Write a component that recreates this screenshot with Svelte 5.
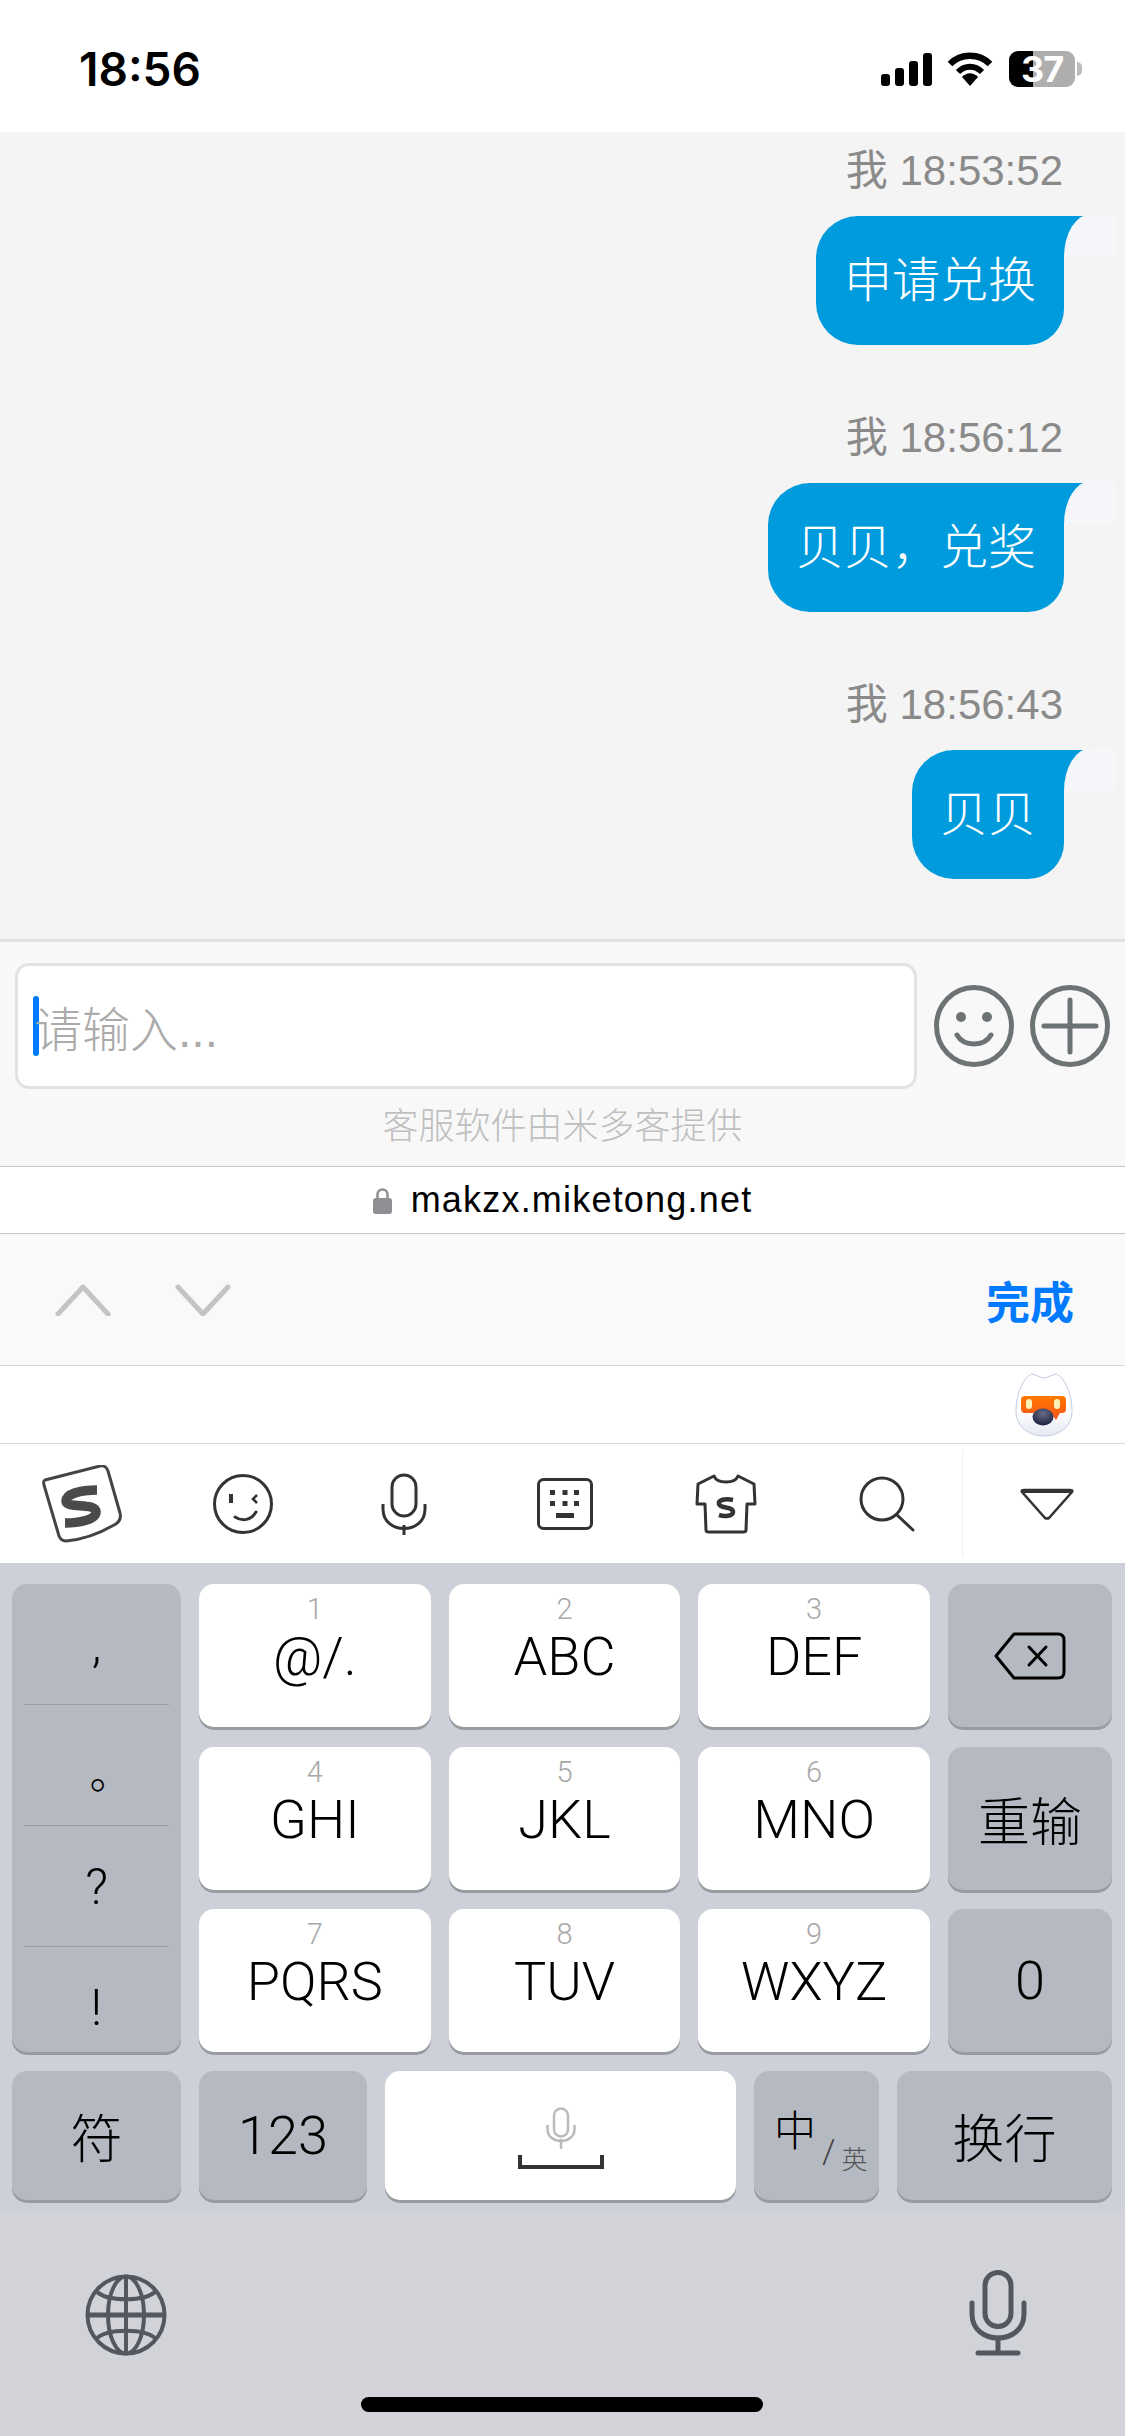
<script>
	const messages = [
		{ time: '我 18:53:52', text: '申请兑换' },
		{ time: '我 18:56:12', text: '贝贝，兑奖' },
		{ time: '我 18:56:43', text: '贝贝' }
	];
	const numKeys = [
		{ n: '1', l: '@/.' },
		{ n: '2', l: 'ABC' },
		{ n: '3', l: 'DEF' },
		{ n: '4', l: 'GHI' },
		{ n: '5', l: 'JKL' },
		{ n: '6', l: 'MNO' },
		{ n: '7', l: 'PQRS' },
		{ n: '8', l: 'TUV' },
		{ n: '9', l: 'WXYZ' }
	];
	const symbols = [',', '。', '?', '!'];
</script>

<div class="phone">
	<header class="status">
		<span class="clock">18:56</span>
		<div class="status-icons">
			<svg width="51" height="33" viewBox="0 0 51 33" fill="#000">
				<rect x="0" y="21" width="9" height="12" rx="3" />
				<rect x="14" y="15" width="9" height="18" rx="3" />
				<rect x="28" y="8" width="9" height="25" rx="3" />
				<rect x="42" y="0" width="9" height="33" rx="3" />
			</svg>
			<svg width="46" height="34" viewBox="0 0 46 34">
				<path d="M3 12 C14 1 32 1 43 12" fill="none" stroke="#000" stroke-width="6.5" />
				<path d="M11 20 C18 13 28 13 35 20" fill="none" stroke="#000" stroke-width="6" />
				<path d="M15 25 C20 20 26 20 31 25 L23 34 Z" fill="#000" />
			</svg>
			<div class="battery">
				<div class="battery-body"><span>37</span></div>
				<div class="battery-nub"></div>
			</div>
		</div>
	</header>

	<section class="chat">
		{#each messages as m}
			<div class="stamp">{m.time}</div>
			<div class="bubble">{m.text}</div>
		{/each}
	</section>

	<section class="composer">
		<div class="composer-row">
			<div class="input">
				<i class="caret"></i><span>请输入...</span>
			</div>
			<svg class="round smile" width="80" height="82" viewBox="0 0 80 82" fill="none" stroke="#6d7275" stroke-width="5">
				<ellipse cx="40" cy="41" rx="37.5" ry="38.5" />
				<circle cx="27" cy="32" r="5" fill="#6d7275" stroke="none" />
				<circle cx="53" cy="32" r="5" fill="#6d7275" stroke="none" />
				<path d="M23 50 C30 62 50 62 57 50" stroke-linecap="round" />
			</svg>
			<svg class="round" width="80" height="82" viewBox="0 0 80 82" fill="none" stroke="#6d7275" stroke-width="5">
				<ellipse cx="40" cy="41" rx="37.5" ry="38.5" />
				<path d="M14 41 H66 M40 15 V67" stroke-linecap="round" />
			</svg>
		</div>
		<p class="vendor">客服软件由米多客提供</p>
	</section>

	<div class="urlbar">
		<svg width="19" height="27" viewBox="0 0 19 27">
			<path d="M4.5 12 V7.5 a5 5 0 0 1 10 0 V12" fill="none" stroke="#8e8e93" stroke-width="2.5" />
			<rect x="0" y="11" width="19" height="16" rx="3" fill="#8e8e93" />
		</svg>
		<span>makzx.miketong.net</span>
	</div>

	<div class="accessory">
		<svg width="56" height="32" viewBox="0 0 56 32" fill="none" stroke="#c4c4c4" stroke-width="5" stroke-linecap="round" stroke-linejoin="round">
			<path d="M3 30 L28 3 L53 30" />
		</svg>
		<svg class="down" width="56" height="32" viewBox="0 0 56 32" fill="none" stroke="#c4c4c4" stroke-width="5" stroke-linecap="round" stroke-linejoin="round">
			<path d="M3 3 L28 30 L53 3" />
		</svg>
		<span class="done">完成</span>
	</div>

	<div class="candidates">
		<svg width="58" height="64" viewBox="0 0 58 64">
			<defs>
				<linearGradient id="egg" x1="0" y1="0" x2="0" y2="1">
					<stop offset="0.6" stop-color="#ffffff" />
					<stop offset="1" stop-color="#e6e8f2" />
				</linearGradient>
				<linearGradient id="band" x1="0" y1="0" x2="0" y2="1">
					<stop offset="0" stop-color="#ff7a00" />
					<stop offset="1" stop-color="#f9541c" />
				</linearGradient>
				<radialGradient id="nose" cx="0.5" cy="0.3" r="0.7">
					<stop offset="0" stop-color="#6a6d88" />
					<stop offset="1" stop-color="#1d2040" />
				</radialGradient>
			</defs>
			<path d="M17 1 C22 2 25 5 29 5 C33 5 36 2 41 1 C50 4 57 22 57 38 C57 54 44 63 29 63 C14 63 1 54 1 38 C1 22 8 4 17 1 Z" fill="url(#egg)" stroke="#c5cae4" stroke-width="1" />
			<path d="M10 23 H47 Q51 23 51 27 V36 Q51 40 47 40 H45 L41 47 L36 40 H10 Q6 40 6 36 V27 Q6 23 10 23 Z" fill="url(#band)" />
			<rect x="11" y="26" width="6" height="10" rx="3" fill="#fff2b8" />
			<rect x="39" y="26" width="6" height="10" rx="3" fill="#fff2b8" />
			<ellipse cx="28" cy="44" rx="10.5" ry="8.5" fill="url(#nose)" />
		</svg>
	</div>

	<nav class="ime-bar">
		<div class="ime-cell">
			<svg width="80" height="78" viewBox="0 0 80 78">
				<path d="M3 15 L58 1 Q64 0 66 6 L78 48 Q80 56 72 60 Q48 74 24 76 Q19 76 17 71 L2 20 Q1 16 3 15 Z" fill="none" stroke="#444" stroke-width="3" />
				<path d="M55 25 C38 25 24 29 24 36 C24 44 54 37 54 47 C54 55 36 58 23 58" fill="none" stroke="#4a4a4a" stroke-width="9.5" />
			</svg>
		</div>
		<div class="ime-cell">
			<svg width="60" height="60" viewBox="0 0 60 60" fill="none" stroke="#333" stroke-width="3">
				<circle cx="30" cy="30" r="28.5" />
				<rect x="16" y="20" width="4" height="9" fill="#333" stroke="none" />
				<path d="M44 21 L40 25 L44 29" stroke-width="2.6" />
				<path d="M22 43 C30 48 38 46 43 38" stroke-linecap="round" />
			</svg>
		</div>
		<div class="ime-cell">
			<svg width="46" height="62" viewBox="0 0 46 62" fill="none" stroke="#333" stroke-width="3">
				<rect x="11" y="2" width="24" height="41" rx="12" />
				<path d="M2 31 V36 C2 62 44 62 44 36 V31" />
				<path d="M23 52 V62" />
			</svg>
		</div>
		<div class="ime-cell">
			<svg width="56" height="52" viewBox="0 0 56 52">
				<rect x="1.5" y="1.5" width="53" height="49" rx="5" fill="none" stroke="#333" stroke-width="3" />
				<g fill="#333">
					<rect x="13" y="12" width="5" height="5" /><rect x="25.5" y="12" width="5" height="5" /><rect x="37" y="12" width="5" height="5" />
					<rect x="13" y="23" width="5" height="5" /><rect x="25.5" y="23" width="5" height="5" /><rect x="37" y="23" width="5" height="5" />
					<rect x="19" y="35" width="18" height="5" />
				</g>
			</svg>
		</div>
		<div class="ime-cell">
			<svg width="62" height="60" viewBox="0 0 62 60" fill="none" stroke="#333" stroke-width="3" stroke-linejoin="round">
				<path d="M19 2 C22 10 40 10 43 2 L59 10 L60 30 L52 30 L51 56 Q51 58 48 58 H14 Q11 58 11 56 L10 30 L2 30 L3 10 Z" />
				<path d="M38 26 C30 24 23 26 24 30 C25 35 38 32 38 38 C38 42 30 43 24 41" stroke-width="4.5" />
			</svg>
		</div>
		<div class="ime-cell">
			<svg width="56" height="56" viewBox="0 0 56 56" fill="none" stroke="#333" stroke-width="3">
				<circle cx="23" cy="23" r="21" />
				<path d="M38 39 L54 54" stroke-linecap="round" />
			</svg>
		</div>
		<div class="ime-cell ime-last">
			<svg width="54" height="32" viewBox="0 0 54 32" fill="none" stroke="#333" stroke-width="2.6" stroke-linejoin="round">
				<path d="M2 4 Q1 2 4 2 H50 Q53 2 52 4 L29 30 Q27 31 25 30 Z" />
				<path d="M2 3 H52" stroke-width="4" />
			</svg>
		</div>
	</nav>

	<section class="keyboard">
		<div class="grid">
			<div class="key dark symbols">
				{#each symbols as s}
					<div class="symbol"><span>{s}</span></div>
				{/each}
			</div>
			{#each numKeys as k, i}
				<div class="key num" style="grid-row: {Math.floor(i / 3) + 1}">
					<span class="digit">{k.n}</span>
					<span class="letters">{k.l}</span>
				</div>
			{/each}
			<button class="key dark side backspace" aria-label="delete">
				<svg width="72" height="48" viewBox="0 0 72 48" fill="none" stroke="#000" stroke-width="3" stroke-linejoin="round">
					<path d="M20 2 H64 Q70 2 70 8 V40 Q70 46 64 46 H20 L2 24 Z" />
					<path d="M35 15 L52 33 M52 15 L35 33" stroke-linecap="round" />
				</svg>
			</button>
			<div class="key dark side cjk retype">重输</div>
			<div class="key dark side zero">0</div>
		</div>

		<div class="bottom-row">
			<div class="key dark cjk fn w169">符</div>
			<div class="key dark fn w168 digits">123</div>
			<div class="key space">
				<svg width="30" height="42" viewBox="0 0 30 42" fill="none" stroke="#bbb" stroke-width="2.5">
					<rect x="8" y="1.5" width="14" height="28" rx="7" />
					<path d="M1.5 18 V22 C1.5 38 28.5 38 28.5 22 V18" />
					<path d="M15 32 V42" />
				</svg>
				<svg width="86" height="14" viewBox="0 0 86 14" fill="none" stroke="#333" stroke-width="4">
					<path d="M2 0 V12 H84 V0" />
				</svg>
			</div>
			<div class="key dark fn w125 lang">
				<span class="zh">中</span><span class="slash">/</span><span class="en">英</span>
			</div>
			<div class="key dark cjk fn grow">换行</div>
		</div>

		<div class="sys-row">
			<svg width="82" height="82" viewBox="0 0 82 82" fill="none" stroke="#53575e" stroke-width="4">
				<circle cx="41" cy="41" r="38.5" />
				<ellipse cx="41" cy="41" rx="18" ry="38.5" />
				<path d="M41 2.5 V79.5" />
				<path d="M2.5 41 H79.5" stroke-width="5" />
				<path d="M11 17 C22 28 60 28 71 17" />
				<path d="M11 65 C22 54 60 54 71 65" />
			</svg>
			<svg width="58" height="86" viewBox="0 0 58 86" fill="none" stroke="#53575e" stroke-width="5" stroke-linecap="round">
				<rect x="16" y="2.5" width="26" height="54" rx="13" />
				<path d="M3 33 V44 C3 76 55 76 55 44 V33" />
				<path d="M29 68 V82" />
				<path d="M9 83 H49" stroke-width="5" />
			</svg>
		</div>

		<div class="home"></div>
	</section>
</div>

<style>
	:global(body) {
		margin: 0;
		background: #fff;
	}

	.phone {
		width: 1125px;
		height: 2436px;
		display: flex;
		flex-direction: column;
		overflow: hidden;
		font-family: "Liberation Sans", "Noto Sans CJK SC", sans-serif;
	}

	.status {
		height: 132px;
		box-sizing: border-box;
		flex: none;
		background: #fff;
		display: flex;
		justify-content: space-between;
		align-items: center;
		padding: 6px 43px 0 79px;
	}

	.clock {
		font-family: Inter, sans-serif;
		font-size: 46px;
		font-weight: 600;
		color: #000;
	}

	.status-icons {
		display: flex;
		align-items: center;
		gap: 15px;
	}

	.battery {
		display: flex;
		align-items: center;
		gap: 2px;
		margin-left: 1px;
	}

	.battery-body {
		width: 66px;
		height: 36px;
		border-radius: 9px;
		background: linear-gradient(90deg, #000 24px, #aeaeae 24px);
		color: #fff;
		font-size: 36px;
		font-weight: 700;
		display: flex;
		align-items: center;
		justify-content: center;
		font-family: Inter, sans-serif;
		letter-spacing: -1px;
	}

	.battery-nub {
		width: 5px;
		height: 14px;
		background: #bbb;
		border-radius: 0 5px 5px 0;
	}

	.chat {
		height: 810px;
		flex: none;
		box-sizing: border-box;
		background: #f4f4f4;
		display: flex;
		flex-direction: column;
		align-items: flex-end;
		padding: 14px 61px 0 0;
		border-bottom: 3px solid #e1e1e1;
	}

	.stamp {
		font-size: 42px;
		line-height: 50px;
		color: #8a8a8a;
		margin-right: 1px;
	}

	.bubble {
		position: relative;
		height: 129px;
		box-sizing: border-box;
		margin: 20px 0 68px;
		padding: 0 28px;
		background: #009bdc;
		color: #fff;
		font-size: 48px;
		font-weight: 300;
		line-height: 129px;
		border-radius: 42px 0 36px 42px;
	}

	.bubble::before {
		content: "";
		position: absolute;
		left: 100%;
		top: 0;
		width: 25px;
		height: 40px;
		background: #009bdc;
		border-bottom: 1px solid #b9dcf0;
	}

	.bubble::after {
		content: "";
		position: absolute;
		left: 100%;
		top: -2px;
		width: 52px;
		height: 43px;
		background: #f5f6f9;
		border-top-left-radius: 27px 43px;
	}

	.composer {
		height: 225px;
		flex: none;
		box-sizing: border-box;
		background: #f8f8f8;
		border-bottom: 1px solid #c4c4c4;
		padding: 21px 15px 0;
	}

	.composer-row {
		display: flex;
		align-items: center;
		gap: 16px;
	}

	.input {
		width: 902px;
		height: 126px;
		box-sizing: border-box;
		background: #fff;
		border: 3px solid #e2e2e2;
		border-radius: 14px;
		display: flex;
		align-items: center;
		padding-left: 15px;
		color: #ababab;
		font-size: 48px;
		font-weight: 300;
		flex: none;
	}

	.caret {
		width: 6px;
		height: 60px;
		background: #007aff;
		border-radius: 3px;
		margin-right: -5px;
		flex: none;
	}

	.round {
		flex: none;
	}

	.smile {
		margin-left: 1px;
	}

	.vendor {
		margin: 18px 0 0;
		text-align: center;
		font-size: 36px;
		line-height: 40px;
		font-weight: 300;
		color: #bfbfbf;
	}

	.urlbar {
		height: 67px;
		flex: none;
		box-sizing: border-box;
		background: #fff;
		border-bottom: 1px solid #c4c4c4;
		display: flex;
		align-items: center;
		justify-content: center;
		gap: 19px;
		font-size: 36px;
		letter-spacing: 1.2px;
		color: #000;
	}

	.accessory {
		height: 132px;
		flex: none;
		box-sizing: border-box;
		background: #f9f9f9;
		border-bottom: 1px solid #d8d8d8;
		display: flex;
		align-items: center;
		padding: 0 51px 0 55px;
	}

	.down {
		margin-left: 64px;
	}

	.done {
		margin-left: auto;
		font-size: 44px;
		font-weight: 700;
		color: #007aff;
	}

	.candidates {
		height: 78px;
		flex: none;
		box-sizing: border-box;
		background: #fff;
		border-bottom: 1px solid #d8d8d8;
		display: flex;
		justify-content: flex-end;
		align-items: center;
		padding-right: 52px;
	}

	.ime-bar {
		height: 119px;
		flex: none;
		background: #fff;
		display: grid;
		grid-template-columns: repeat(6, 161px) 1fr;
		padding-left: 1px;
	}

	.ime-cell {
		display: flex;
		align-items: center;
		justify-content: center;
	}

	.ime-last {
		margin: 6px 0 6px -5px;
		padding-left: 5px;
		border-left: 1px solid #f0f0f0;
	}

	.keyboard {
		flex: 1;
		background: linear-gradient(#cdd0d8 647px, #d1d3d9 647px);
		padding: 21px 13px 0 12px;
		display: flex;
		flex-direction: column;
	}

	.grid {
		display: grid;
		grid-template-columns: 169px 1fr 1fr 1fr 164px;
		grid-template-rows: repeat(3, 143px);
		column-gap: 18px;
		row-gap: 19.5px;
	}

	.key {
		border-radius: 15px;
		box-shadow: 0 3px 0 #989ba0;
		background: #fff;
		color: #000;
		box-sizing: border-box;
	}

	.dark {
		background: #b5b9c1;
	}

	button.key {
		border: 0;
		padding: 0;
	}

	.symbols {
		grid-row: 1 / 4;
		grid-column: 1;
		display: flex;
		flex-direction: column;
		padding: 0 12px;
	}

	.symbol {
		height: 121px;
		flex: none;
		border-top: 1px solid #9a9da4;
		box-sizing: border-box;
		display: flex;
		justify-content: center;
		font-family: Roboto, "Noto Sans CJK SC", sans-serif;
		font-weight: 300;
		font-size: 50px;
		line-height: 60px;
	}

	.symbol:first-child {
		border-top: 0;
		height: 120px;
		padding-top: 31px;
	}

	.symbol:nth-child(2) {
		padding-top: 40px;
	}

	.symbol:nth-child(2) span {
		font-size: 42px;
		transform: translateX(14px);
	}

	.symbol:nth-child(3) {
		padding-top: 31px;
	}

	.symbol:nth-child(4) {
		height: auto;
		flex: 1;
		padding-top: 31px;
	}

	.num {
		display: flex;
		flex-direction: column;
		align-items: center;
		padding-top: 10px;
		font-family: Roboto, sans-serif;
		font-weight: 300;
	}

	.digit {
		font-size: 29px;
		line-height: 30px;
		color: #a8a8a8;
	}

	.letters {
		font-size: 54px;
		line-height: 50px;
		margin-top: 8px;
	}

	.side {
		display: flex;
		align-items: center;
		justify-content: center;
		grid-column: 5;
	}

	.backspace {
		grid-row: 1;
	}

	.retype {
		grid-row: 2;
	}

	.cjk {
		font-size: 52px;
		font-weight: 300;
		display: flex;
		align-items: center;
		justify-content: center;
	}

	.zero {
		grid-row: 3;
		font-family: Roboto, sans-serif;
		font-weight: 300;
		font-size: 54px;
	}

	.bottom-row {
		display: flex;
		height: 129px;
		margin-top: 19px;
		gap: 18px;
	}

	.fn {
		display: flex;
		align-items: center;
		justify-content: center;
		flex: none;
	}

	.w169 {
		width: 169px;
	}

	.w168 {
		width: 168px;
	}

	.w125 {
		width: 125px;
	}

	.grow {
		flex: 1;
	}

	.digits {
		font-family: Roboto, sans-serif;
		font-weight: 300;
		font-size: 54px;
	}

	.space {
		width: 351px;
		flex: none;
		display: flex;
		flex-direction: column;
		align-items: center;
		padding-top: 36px;
		gap: 6px;
	}

	.lang {
		align-items: flex-start;
		justify-content: flex-start;
		padding: 36px 0 0 20px;
	}

	.zh {
		font-size: 42px;
		font-weight: 300;
		line-height: 50px;
	}

	.slash {
		font-family: Roboto, sans-serif;
		font-weight: 300;
		font-size: 34px;
		margin: 24px 6px 0 6px;
		color: #444;
	}

	.en {
		font-size: 26px;
		font-weight: 300;
		margin-top: 32px;
		color: #555;
	}

	.sys-row {
		display: flex;
		justify-content: space-between;
		align-items: flex-end;
		padding: 70px 85px 0 73px;
	}

	.home {
		width: 402px;
		height: 15px;
		border-radius: 8px;
		background: #000;
		align-self: center;
		margin-top: 41px;
	}
</style>
